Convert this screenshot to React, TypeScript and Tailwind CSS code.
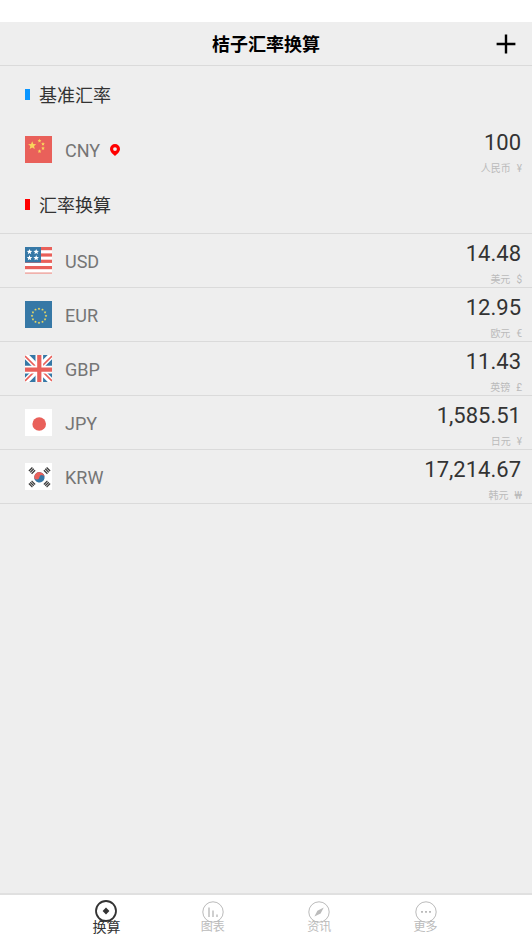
import type { ReactNode } from "react";

const starPath = (cx: number, cy: number, r: number) =>
  Array.from({ length: 10 }, (_, i) => {
    const a = (Math.PI * i) / 5 - Math.PI / 2;
    const k = i % 2 ? r * 0.45 : r;
    return `${i ? "L" : "M"}${(cx + k * Math.cos(a)).toFixed(2)} ${(cy + k * Math.sin(a)).toFixed(2)}`;
  }).join("") + "Z";

function Flag({ children }: { children: ReactNode }) {
  return (
    <svg viewBox="0 0 27 27" className="size-[27px] shrink-0" aria-hidden="true">
      {children}
    </svg>
  );
}

const RED = "#e9605a";
const BLUE = "#3678a6";

const ChinaFlag = () => (
  <Flag>
    <rect width="27" height="27" fill={RED} />
    <g fill="#f9d65c">
      <path d={starPath(7.2, 9.5, 4.3)} />
      <path d={starPath(14.5, 4.8, 2)} />
      <path d={starPath(18, 8, 2)} />
      <path d={starPath(18, 12.3, 2)} />
      <path d={starPath(14.5, 15.3, 2)} />
    </g>
  </Flag>
);

const UsaFlag = () => (
  <Flag>
    <rect width="27" height="27" fill="#fff" />
    {[0, 6.4, 12.7, 19].map((y) => (
      <rect key={y} y={y} width="27" height="3.2" fill={RED} />
    ))}
    <rect y="25.3" width="27" height="1.7" fill="#f0b1ac" />
    <rect width="16" height="15.5" fill={BLUE} />
    <g fill="#fff">
      <path d={starPath(4.5, 4.8, 2.9)} />
      <path d={starPath(11.2, 4.8, 2.9)} />
      <path d={starPath(4.5, 11, 2.9)} />
      <path d={starPath(11.2, 11, 2.9)} />
    </g>
  </Flag>
);

const EuFlag = () => (
  <Flag>
    <rect width="27" height="27" fill={BLUE} />
    {Array.from({ length: 12 }, (_, i) => {
      const a = (Math.PI * i) / 6;
      return (
        <path
          key={i}
          d={starPath(14 + 7 * Math.sin(a), 14.8 - 7 * Math.cos(a), 1.4)}
          fill="#f9e05c"
        />
      );
    })}
  </Flag>
);

const UkFlag = () => (
  <Flag>
    <rect width="27" height="27" fill={BLUE} />
    <path d="M0 0L27 27M27 0L0 27" stroke="#fff" strokeWidth="6" />
    <path d="M0 1L13 14M27 1L14 14M0 26L13 13M27 26L14 13" stroke={RED} strokeWidth="1.7" />
    <path d="M14.3 0V27M0 14.6H27" stroke="#fff" strokeWidth="7.6" />
    <path d="M14.3 0V27M0 14.6H27" stroke={RED} strokeWidth="4.2" />
  </Flag>
);

const JapanFlag = () => (
  <Flag>
    <rect width="27" height="27" fill="#fff" />
    <circle cx="14.2" cy="15" r="6.8" fill={RED} />
  </Flag>
);

const KoreaFlag = () => (
  <Flag>
    <rect width="27" height="27" fill="#fff" />
    <g transform="rotate(10 14.4 14.3)">
      <circle cx="14.4" cy="14.3" r="5.2" fill={BLUE} />
      <path
        d="M9.2 14.3A5.2 5.2 0 0 1 19.6 14.3A2.6 2.6 0 0 0 14.4 14.3A2.6 2.6 0 0 1 9.2 14.3Z"
        fill={RED}
      />
    </g>
    {[
      [7, 7.6, -45],
      [22, 7.6, 45],
      [7, 21, 45],
      [22, 21, -45],
    ].map(([x, y, r]) => (
      <g key={`${x}-${y}`} transform={`translate(${x} ${y}) rotate(${r})`}>
        <path d="M-2.5-1.9H2.5M-2.5 0H2.5M-2.5 1.9H2.5" stroke="#3c3c3c" strokeWidth="1.3" />
      </g>
    ))}
  </Flag>
);

const rates = [
  { code: "USD", amount: "14.48", unit: "美元", symbol: "$", flag: <UsaFlag /> },
  { code: "EUR", amount: "12.95", unit: "欧元", symbol: "€", flag: <EuFlag /> },
  { code: "GBP", amount: "11.43", unit: "英镑", symbol: "£", flag: <UkFlag /> },
  { code: "JPY", amount: "1,585.51", unit: "日元", symbol: "¥", flag: <JapanFlag /> },
  { code: "KRW", amount: "17,214.67", unit: "韩元", symbol: "₩", flag: <KoreaFlag /> },
];

const tabs = [
  {
    label: "换算",
    active: true,
    icon: (
      <>
        <circle cx="11" cy="11" r="10" strokeWidth="1.8" />
        <path d="M11 7.6L14.4 11L11 14.4L7.6 11Z" fill="currentColor" stroke="none" />
      </>
    ),
  },
  {
    label: "图表",
    active: false,
    icon: (
      <>
        <circle cx="11" cy="12" r="10.2" />
        <path d="M7 7.5V17M11 10.5V17M15 14.5V17" strokeWidth="1.4" />
      </>
    ),
  },
  {
    label: "资讯",
    active: false,
    icon: (
      <>
        <circle cx="11" cy="12" r="10.2" />
        <path d="M15.8 7.6L12.6 13.4L6.4 16.6L9.4 10.8Z" fill="currentColor" stroke="none" />
      </>
    ),
  },
  {
    label: "更多",
    active: false,
    icon: (
      <>
        <circle cx="11" cy="12" r="10.2" />
        <path d="M6 11.8h2M10 11.8h2M14 11.8h2" strokeWidth="1.8" />
      </>
    ),
  },
];

function SectionTitle({ color, children }: { color: string; children: ReactNode }) {
  return (
    <h2 className="flex h-[57px] items-center gap-[9px] pl-[25px] text-[18px] leading-6 text-[#333]">
      <span className={`h-[11px] w-[5px] ${color}`} />
      <span className="pt-[3px]">{children}</span>
    </h2>
  );
}

function Unit({ name, symbol }: { name: string; symbol: string }) {
  return (
    <span className="flex gap-[6px] text-[10px] leading-5 text-[#bbb]">
      <span>{name}</span>
      <span>{symbol}</span>
    </span>
  );
}

export default function App() {
  return (
    <div className="flex min-h-screen flex-col bg-[#eee] font-[Roboto,'Noto_Sans_CJK_SC',sans-serif]">
      <div className="h-[22px] bg-white" />
      <header className="grid h-11 grid-cols-[1fr_auto_1fr] items-center border-b border-[#dadada] px-4">
        <h1 className="col-start-2 pt-0.5 text-[18px] font-bold leading-6 text-black">桔子汇率换算</h1>
        <button type="button" aria-label="添加货币" className="justify-self-end">
          <svg viewBox="0 0 20 20" className="size-5" stroke="#000" strokeWidth="2.4" aria-hidden="true">
            <path d="M10 .6V19.400M.6 10H19.400" />
          </svg>
        </button>
      </header>

      <main className="flex-1">
        <SectionTitle color="bg-[#0a96ff]">基准汇率</SectionTitle>
        <div className="flex h-[53px] items-center pl-[25px] pr-[10px]">
          <ChinaFlag />
          <label htmlFor="base-amount" className="ml-[13px] pt-0.5 text-[18px] leading-6 text-[#757575]">
            CNY
          </label>
          <svg viewBox="0 0 10 12" className="ml-[10px] h-3 w-[10px] shrink-0" aria-hidden="true">
            <path
              fillRule="evenodd"
              fill="#f00"
              d="M5 0a5 5 0 0 1 5 5c0 2.800-3 5.400-5 7C3 10.400 0 7.800 0 5a5 5 0 0 1 5-5Zm0 3.200a1.900 1.900 0 1 0 0 3.800a1.900 1.900 0 0 0 0-3.800Z"
            />
          </svg>
          <div className="flex min-w-0 flex-1 flex-col items-end self-start pt-1">
            <input
              id="base-amount"
              inputMode="decimal"
              defaultValue="100"
              className="h-8 w-full bg-transparent pr-px text-right text-[22px] leading-8 text-[#333] outline-none"
            />
            <Unit name="人民币" symbol="¥" />
          </div>
        </div>
        <SectionTitle color="bg-[#f00]">汇率换算</SectionTitle>

        <ul className="border-t border-[#dadada]">
          {rates.map((rate) => (
            <li
              key={rate.code}
              className="flex h-[54px] items-center border-b border-[#dadada] pl-[25px] pr-[10px]"
            >
              {rate.flag}
              <span className="ml-[13px] pt-0.5 text-[18px] leading-6 text-[#757575]">{rate.code}</span>
              <div className="flex flex-1 flex-col items-end self-start pt-1">
                <span className="pr-px text-[22px] leading-8 text-[#333]">{rate.amount}</span>
                <Unit name={rate.unit} symbol={rate.symbol} />
              </div>
            </li>
          ))}
        </ul>
      </main>

      <nav className="flex h-[51px] border-t-2 border-[#e0e0e0] bg-white px-[10%]">
        {tabs.map((tab) => (
          <button
            key={tab.label}
            type="button"
            aria-current={tab.active ? "page" : undefined}
            className={`flex flex-1 flex-col items-center pt-[5px] ${
              tab.active ? "text-[14px] text-[#333]" : "text-[12px] text-[#bbb]"
            }`}
          >
            <svg
              viewBox="0 0 22 22"
              className="size-[22px] shrink-0 overflow-visible"
              fill="none"
              stroke="currentColor"
              aria-hidden="true"
            >
              {tab.icon}
            </svg>
            <span className="-mt-[3px] leading-4">{tab.label}</span>
          </button>
        ))}
      </nav>
    </div>
  );
}
